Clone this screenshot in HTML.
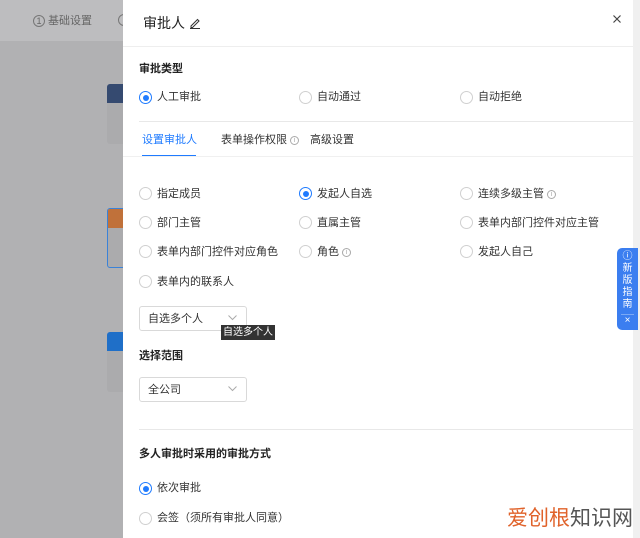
<!DOCTYPE html><html><head><meta charset="utf-8"><style>
*{margin:0;padding:0;box-sizing:border-box}
body{width:640px;height:538px;overflow:hidden;background:#b1b1b3;font-family:"Liberation Sans","Noto Sans CJK SC",sans-serif;color:#333;font-size:11px;position:relative}
.top{position:absolute;left:0;top:0;width:640px;height:41px;background:#bdbdbf}
.abs{position:absolute}
.card{position:absolute;left:107px;width:30px;height:60px;background:#ababad;border-radius:3px;overflow:hidden}
.panel{position:absolute;left:123px;top:0;width:510px;height:538px;background:#fff}
.sb{position:absolute;left:633px;top:0;width:7px;height:538px;background:#f0f0f0}
.r{position:absolute;width:13px;height:13px;border:1px solid #d0d0d0;border-radius:50%;background:#fff}
.r.on{border-color:#1f7bff}
.r.on::after{content:"";position:absolute;left:2.5px;top:2.5px;width:6px;height:6px;border-radius:50%;background:#1f7bff}
.t{position:absolute;font-size:11px;color:#333;white-space:nowrap;line-height:14px}
.h{position:absolute;font-size:11px;font-weight:bold;color:#222;line-height:14px}
.sel{position:absolute;width:108px;height:25px;border:1px solid #d9d9d9;border-radius:3px}
.hr{position:absolute;height:1px;background:#e8e8e8}
.i{display:inline-block;width:9px;height:9px;border:1px solid #aaa;border-radius:50%;font-size:7px;line-height:7px;text-align:center;color:#aaa;vertical-align:1px;margin-left:3px}
.chev{position:absolute}
</style></head><body>
<div class="top"></div>
<div class="t" style="left:33px;top:14px;color:#666;font-size:11px"><span style="display:inline-block;width:12px;height:12px;border:1px solid #777;border-radius:50%;font-size:9px;line-height:10px;text-align:center">1</span> 基础设置</div>
<div class="abs" style="left:118px;top:14px;width:12px;height:12px;border:1px solid #777;border-radius:50%"></div>
<div class="card" style="top:84px"><div style="height:19px;background:#354a70"></div></div>
<div class="card" style="top:208px;border:1px solid #3a82d8"><div style="height:19px;background:#c0713a"></div></div>
<div class="card" style="top:332px"><div style="height:19px;background:#1f6fc8"></div></div>
<div class="panel">
<div class="t" style="left:20px;top:15px;font-size:14px;line-height:16px;color:#222">审批人 <svg width="12" height="12" viewBox="0 0 12 12" style="vertical-align:-1px"><path d="M2 9L8.5 2.5l1.5 1.5L3.5 10.5H2z M1 11.5h10" stroke="#333" fill="none" stroke-width="1"/></svg></div>
<svg class="chev" style="left:489px;top:14px" width="10" height="10" viewBox="0 0 10 10"><path d="M1.5 1.5l7 7M8.5 1.5l-7 7" stroke="#444" stroke-width="1.2"/></svg>
<div class="hr" style="left:0;top:46px;width:510px;background:#eee"></div>
<div class="h" style="left:16px;top:62px">审批类型</div>
<div class="r on" style="left:16px;top:91px"></div><div class="t" style="left:34px;top:90px">人工审批</div>
<div class="r" style="left:176px;top:91px"></div><div class="t" style="left:194px;top:90px">自动通过</div>
<div class="r" style="left:337px;top:91px"></div><div class="t" style="left:355px;top:90px">自动拒绝</div>
<div class="hr" style="left:16px;top:121px;width:494px"></div>
<div class="t" style="left:19px;top:133px;color:#1f7bff">设置审批人</div>
<div class="abs" style="left:19px;top:155px;width:54px;height:2px;background:#1f7bff"></div>
<div class="t" style="left:98px;top:133px">表单操作权限<span class="i">i</span></div>
<div class="t" style="left:187px;top:133px">高级设置</div>
<div class="hr" style="left:0;top:156px;width:510px;background:#f0f0f0"></div>
<div class="r" style="left:16px;top:187px"></div><div class="t" style="left:34px;top:187px">指定成员</div>
<div class="r on" style="left:176px;top:187px"></div><div class="t" style="left:194px;top:187px">发起人自选</div>
<div class="r" style="left:337px;top:187px"></div><div class="t" style="left:355px;top:187px">连续多级主管<span class="i">i</span></div>
<div class="r" style="left:16px;top:216px"></div><div class="t" style="left:34px;top:216px">部门主管</div>
<div class="r" style="left:176px;top:216px"></div><div class="t" style="left:194px;top:216px">直属主管</div>
<div class="r" style="left:337px;top:216px"></div><div class="t" style="left:355px;top:216px">表单内部门控件对应主管</div>
<div class="r" style="left:16px;top:245px"></div><div class="t" style="left:34px;top:245px">表单内部门控件对应角色</div>
<div class="r" style="left:176px;top:245px"></div><div class="t" style="left:194px;top:245px">角色<span class="i">i</span></div>
<div class="r" style="left:337px;top:245px"></div><div class="t" style="left:355px;top:245px">发起人自己</div>
<div class="r" style="left:16px;top:275px"></div><div class="t" style="left:34px;top:275px">表单内的联系人</div>
<div class="sel" style="left:16px;top:306px"></div><div class="t" style="left:25px;top:312px">自选多个人</div>
<svg class="chev" style="left:105px;top:315px" width="9" height="6" viewBox="0 0 9 6"><path d="M0.5 0.5l4 4 4-4" stroke="#aaa" fill="none"/></svg>
<div class="abs" style="left:98px;top:325px;width:54px;height:15px;background:#333;color:#fff;font-size:10px;line-height:15px;text-align:center">自选多个人</div>
<div class="h" style="left:16px;top:349px">选择范围</div>
<div class="sel" style="left:16px;top:377px"></div><div class="t" style="left:25px;top:383px">全公司</div>
<svg class="chev" style="left:105px;top:386px" width="9" height="6" viewBox="0 0 9 6"><path d="M0.5 0.5l4 4 4-4" stroke="#aaa" fill="none"/></svg>
<div class="hr" style="left:16px;top:429px;width:494px"></div>
<div class="h" style="left:16px;top:447px">多人审批时采用的审批方式</div>
<div class="r on" style="left:16px;top:482px"></div><div class="t" style="left:34px;top:481px">依次审批</div>
<div class="r" style="left:16px;top:512px"></div><div class="t" style="left:34px;top:511px">会签（须所有审批人同意）</div>
</div>
<div class="sb"></div>
<div class="abs" style="left:617px;top:248px;width:21px;height:82px;background:#3b7ef0;border-radius:5px 0 0 5px;color:#fff;font-size:10px;text-align:center;line-height:12px;padding-top:3px">ⓘ<br>新<br>版<br>指<br>南<br><span style="display:block;border-top:1px solid #7aa8f5;margin:3px 4px 0;line-height:12px">×</span></div>
<div class="abs" style="left:507px;top:506px;font-size:21px;line-height:26px"><span style="color:#e0622a">爱创根</span><span style="color:#555">知识网</span></div>
</body></html>
